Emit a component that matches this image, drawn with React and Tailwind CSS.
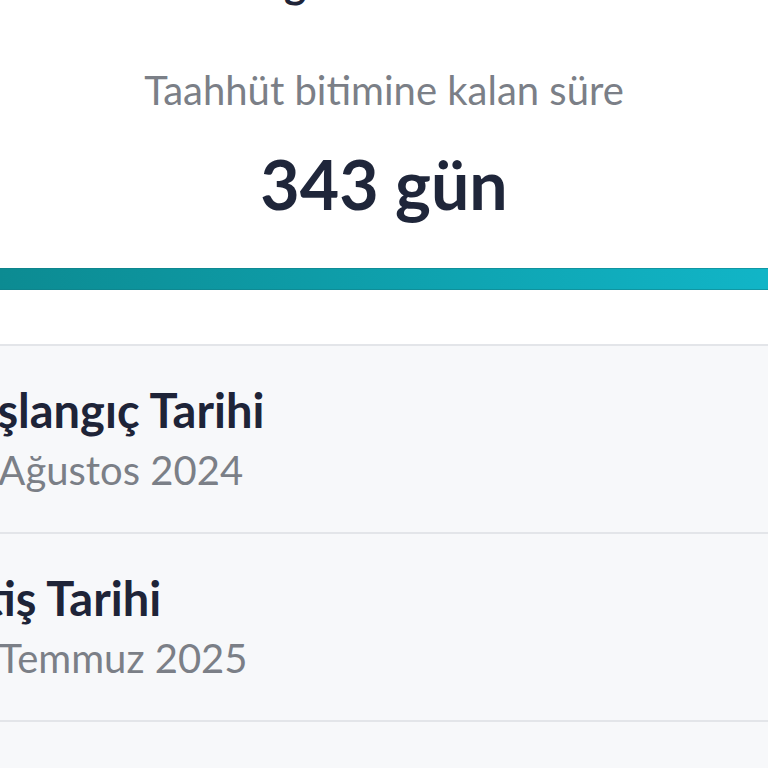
export default function App() {
  return (
    <div className="w-[768px] h-[768px] overflow-hidden bg-white font-['Lato',sans-serif]">
      <div className="flex flex-col items-center">
        <div className="-mt-[44px] h-[52px] leading-[52px] text-[42px] font-bold text-[#1e2438] whitespace-nowrap">
          Taahhüt Bilgileri ve Kalan Süreniz
        </div>
        <div className="mt-[58px] h-[48px] leading-[48px] text-[40px] text-[#7b7f87] whitespace-nowrap">
          Taahhüt bitimine kalan süre
        </div>
        <div className="mt-[34px] h-[72px] leading-[72px] text-[68px] font-bold text-[#1f263a] whitespace-nowrap">
          343 gün
        </div>
      </div>
      <div className="mt-[48px] h-[22px] w-full bg-gradient-to-r from-[#0c8b92] to-[#11b5c7] border-y border-[#0f7c84]/50" />
      <div className="h-[54px]" />
      <div className="border-t-2 border-[#e3e5e9] bg-[#f7f8fa]">
        <div className="h-[188px] border-b-2 border-[#e3e5e9] pt-[36px] pl-[2px]">
          <div className="-ml-[59px] text-[47px] leading-[56px] font-bold text-[#1e2438] whitespace-nowrap">Başlangıç Tarihi</div>
          <div className="-ml-[59px] mt-[10px] text-[40px] leading-[44px] text-[#7b7f87] whitespace-nowrap">01 Ağustos 2024</div>
        </div>
        <div className="h-[188px] border-b-2 border-[#e3e5e9] pt-[36px] pl-[2px]">
          <div className="-ml-[59px] text-[47px] leading-[56px] font-bold text-[#1e2438] whitespace-nowrap">Bitiş Tarihi</div>
          <div className="-ml-[59px] mt-[10px] text-[40px] leading-[44px] text-[#7b7f87] whitespace-nowrap">31 Temmuz 2025</div>
        </div>
        <div className="h-[100px]" />
      </div>
    </div>
  );
}
